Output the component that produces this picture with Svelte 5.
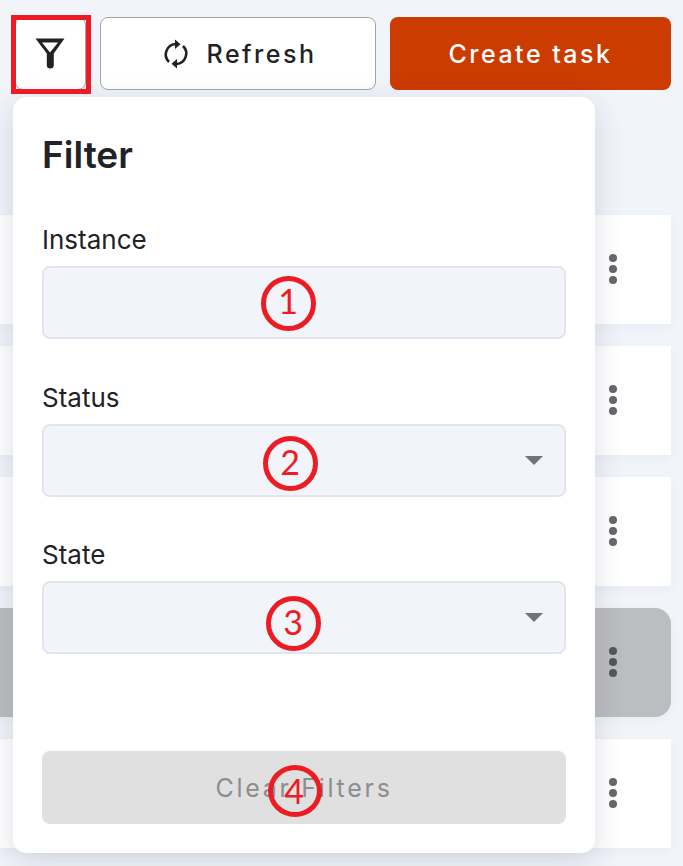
<script>
  const rows = [false, false, false, true, false];
  const fields = [
    { label: 'Instance', select: false },
    { label: 'Status', select: true },
    { label: 'State', select: true }
  ];
  const marks = [
    { n: 1, cls: 'm1' },
    { n: 2, cls: 'm2' },
    { n: 3, cls: 'm3' },
    { n: 4, cls: 'm4' }
  ];
</script>

<div class="page">
  <div class="toolbar">
    <button class="btn filter" aria-label="Filter">
      <svg width="32" height="32" viewBox="0 0 32 32" fill="none">
        <path d="M1.500 1.500h29L19.800 16.500V28a3.500 3.500 0 0 1-7 0V16.500Z" fill="#212226"/>
        <path d="M8 5.500h16L16 15.500Z" fill="#fff"/>
      </svg>
    </button>
    <button class="btn refresh">
      <svg width="28" height="30" viewBox="0 0 28 30" fill="none" stroke="#212226" stroke-width="2.600">
        <path d="M7 23A10.500 10.500 0 0 1 13.500 5"/>
        <path d="M21 7A10.500 10.500 0 0 1 14.500 25"/>
        <path d="M13 .5v9.500l5.500-4.700Z" fill="#212226" stroke="none"/>
        <path d="M15 20v9.500l-5.500-4.700Z" fill="#212226" stroke="none"/>
      </svg>
      <span>Refresh</span>
    </button>
    <button class="btn create">Create task</button>
  </div>

  <div class="list">
    {#each rows as selected}
      <div class="row" class:selected>
        <span class="dots"><i></i><i></i><i></i></span>
      </div>
    {/each}
  </div>

  <div class="popover">
    <h2>Filter</h2>
    {#each fields as f}
      <div class="field">
        <div class="label">{f.label}</div>
        <div class="input">
          {#if f.select}<span class="caret"></span>{/if}
        </div>
      </div>
    {/each}
    <button class="clear">Clear Filters</button>
  </div>

  <div class="redbox"></div>
  {#each marks as m}
    <div class="mark {m.cls}">{m.n}</div>
  {/each}
</div>

<style>
  :global(body) {
    margin: 0;
    background: #f1f4f9;
    font-family: Inter, "Liberation Sans", sans-serif;
  }
  .page {
    position: relative;
    width: 683px;
    height: 866px;
    overflow: hidden;
    background: #f1f4f9;
  }
  .toolbar {
    display: flex;
    gap: 14px;
    padding: 17px 12px 0 15px;
    height: 73px;
  }
  .btn {
    height: 73px;
    box-sizing: border-box;
    border-radius: 8px;
    font-family: inherit;
    font-size: 25px;
    letter-spacing: 2.500px;
    font-weight: 500;
    padding: 0;
    display: flex;
    align-items: center;
    justify-content: center;
  }
  .filter {
    width: 71px;
    background: #fff;
    border: 1px solid #a4a4a8;
  }
  .filter svg { margin-top: -1px; margin-left: -2px; }
  .refresh {
    width: 276px;
    background: #fff;
    border: 1px solid #a4a4a8;
    color: #212226;
    gap: 17px;
    padding-left: 2px;
  }
  .create {
    width: 281px;
    background: #cc3b00;
    border: none;
    color: #fff;
  }
  .list {
    margin-top: 125px;
    display: flex;
    flex-direction: column;
    gap: 22px;
    width: 671px;
  }
  .row {
    height: 109px;
    background: #fff;
    box-shadow: 0 3px 10px rgba(40, 50, 90, 0.04);
    display: flex;
    align-items: center;
    justify-content: flex-end;
    padding: 0 54px 2px 0;
    box-sizing: border-box;
  }
  .row.selected {
    background: #bcbdc0;
    border-radius: 0 16px 16px 0;
  }
  .dots {
    display: flex;
    flex-direction: column;
    gap: 3px;
  }
  .dots i {
    display: block;
    width: 8px;
    height: 8px;
    border-radius: 50%;
    background: #66686c;
  }
  .selected .dots i { background: #55565a; }
  .popover {
    position: absolute;
    left: 13px;
    top: 97px;
    width: 582px;
    height: 756px;
    box-sizing: border-box;
    padding: 0 29px;
    background: #fff;
    border-radius: 14px;
    box-shadow: 0 8px 30px rgba(40, 50, 90, 0.16);
    display: flex;
    flex-direction: column;
  }
  h2 {
    margin: 37px 0 0;
    font-size: 37px;
    line-height: 42px;
    font-weight: 600;
    color: #212226;
  }
  .label {
    font-size: 26px;
    line-height: 30px;
    font-weight: 400;
    color: #212226;
    margin-bottom: 11px;
  }
  h2 + .field { margin-top: 49px; }
  .field + .field { margin-top: 44px; }
  .field:nth-of-type(3) { margin-top: 43px; }
  .input {
    height: 73px;
    box-sizing: border-box;
    background: #f1f4f9;
    border: 2px solid #e2e5ec;
    border-radius: 8px;
    position: relative;
  }
  .caret {
    position: absolute;
    right: 21px;
    top: 30px;
    width: 0;
    height: 0;
    border-left: 9px solid transparent;
    border-right: 9px solid transparent;
    border-top: 9px solid #727377;
  }
  .clear {
    margin-top: auto;
    margin-bottom: 29px;
    height: 73px;
    background: #e0e0e0;
    border: none;
    border-radius: 8px;
    font-family: inherit;
    font-size: 25px;
    font-weight: 400;
    letter-spacing: 2.700px;
    color: #8d8d8d;
    padding: 0;
  }
  .redbox {
    position: absolute;
    left: 11px;
    top: 15px;
    width: 80px;
    height: 79px;
    box-sizing: border-box;
    border: 5px solid #ed1c24;
  }
  .mark {
    position: absolute;
    width: 55px;
    height: 55px;
    box-sizing: border-box;
    border: 5px solid #ed1c24;
    border-radius: 50%;
    color: #ed1c24;
    font-family: Lato, sans-serif;
    font-size: 34px;
    display: flex;
    align-items: center;
    justify-content: center;
    line-height: 1;
    padding: 0 1px 4px 0;
  }
  .m1 { left: 261px; top: 276px; padding-bottom: 6px; }
  .m2 { left: 263px; top: 436px; }
  .m3 { left: 266px; top: 596px; }
  .m4 { left: 268px; top: 765px; width: 54px; height: 52px; padding: 0 2px 0 0; }
</style>
